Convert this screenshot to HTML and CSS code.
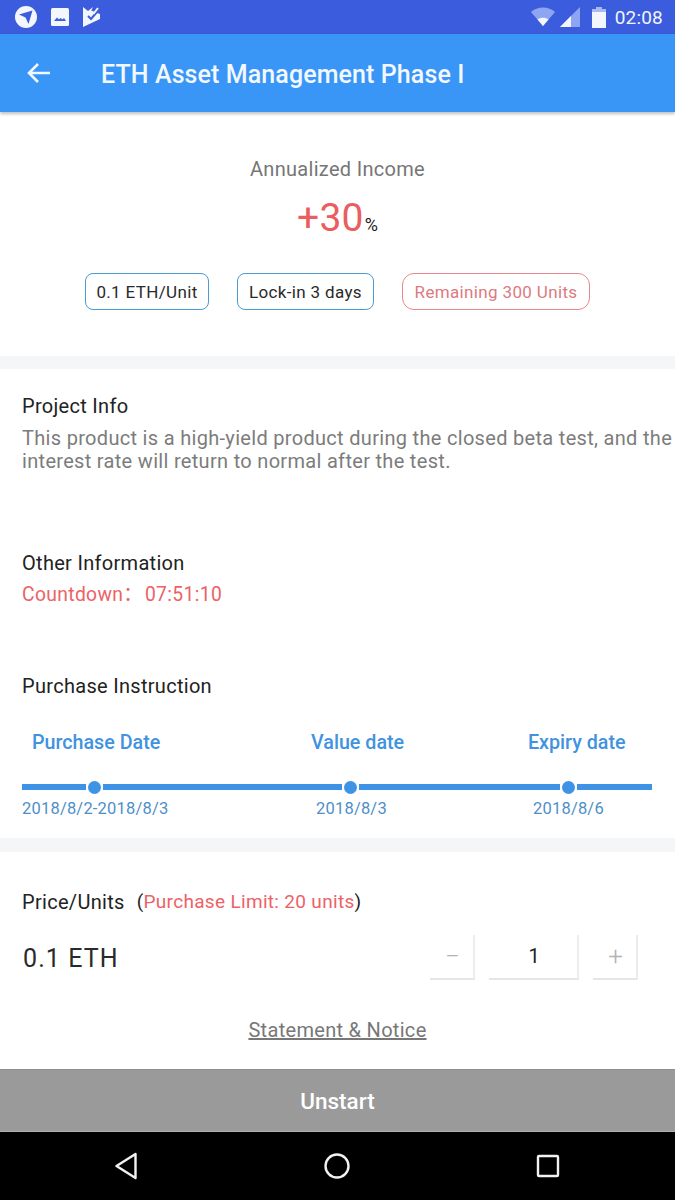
FILE: index.html
```html
<!DOCTYPE html>
<html lang="en">
<head>
<meta charset="utf-8">
<title>ETH Asset Management Phase I</title>
<link rel="stylesheet" href="styles.css">
</head>
<body>
<div class="screen">
  <div class="status">
    <div class="status-left">
      <svg class="ic" width="24" height="24" viewBox="0 0 24 24"><circle cx="12" cy="12" r="11" fill="#f4f6fe"/><path d="M5 9.5 18.5 5.5 14.5 19 11.5 12.5Z" fill="#3b5cdc"/></svg>
      <svg class="ic" width="20" height="20" viewBox="0 0 20 20"><rect x="1" y="1" width="18" height="18" rx="1.5" fill="#f4f6fe"/><path d="M4 14 7 10.5 9 12.5 10.5 11 12.5 12.5 14 11 16 14Z" fill="#3b5cdc"/></svg>
      <svg class="ic" width="20" height="22" viewBox="0 0 20 22"><path d="M1 1 6 5 11 1 9 5 18 8 18 13 1 21Z" fill="#f4f6fe"/><path d="M6 10 9 13 15 6" fill="none" stroke="#3b5cdc" stroke-width="2"/><path d="M8 5 12 7 16 2" fill="none" stroke="#f4f6fe" stroke-width="2"/></svg>
    </div>
    <div class="status-right">
      <svg width="24" height="20" viewBox="0 0 24 20"><path d="M0 5C6-1 18-1 24 5L12 19Z" fill="#8ea6f2"/><path d="M6.500 12.500C9.500 10 14.500 10 17.500 12.500L12 19Z" fill="#f4f6fe"/></svg>
      <svg width="20" height="20" viewBox="0 0 20 20"><path d="M0 20 20 0V20Z" fill="#8ea6f2"/><path d="M0 20 11 9V20Z" fill="#f4f6fe"/></svg>
      <svg class="batt" width="14" height="21" viewBox="0 0 14 21"><path d="M4 0H10V2H14V21H0V2H4Z" fill="#f4f6fe"/><path d="M4 0H10V2H14V5H0V2H4Z" fill="#a9baf2"/></svg>
      <span class="clock">02:08</span>
    </div>
  </div>

  <header class="appbar">
    <svg class="back" width="26" height="24" viewBox="0 0 26 24"><path d="M24 12H3M12 3 3 12 12 21" fill="none" stroke="#f2f8ff" stroke-width="2.600"/></svg>
    <h1 class="title">ETH Asset Management Phase I</h1>
  </header>

  <main class="content">
    <section class="hero">
      <div class="hero-label">Annualized Income</div>
      <div class="rate"><span class="rate-num">+30</span><span class="rate-unit">%</span></div>
      <div class="tags">
        <span class="tag tag-blue tag-a">0.1 ETH/Unit</span>
        <span class="tag tag-blue tag-b">Lock-in 3 days</span>
        <span class="tag tag-red tag-c">Remaining 300 Units</span>
      </div>
    </section>

    <section class="details">
      <h2 class="heading">Project Info</h2>
      <p class="desc">This product is a high-yield product during the closed beta test, and the interest rate will return to normal after the test.</p>
      <h2 class="heading heading-other">Other Information</h2>
      <div class="countdown">Countdown：<span class="cd-time">07:51:10</span></div>
      <h2 class="heading heading-purchase">Purchase Instruction</h2>
      <div class="steps">
        <span class="step step-1">Purchase Date</span>
        <span class="step step-2">Value date</span>
        <span class="step step-3">Expiry date</span>
      </div>
      <div class="track">
        <span class="seg seg-1"></span><span class="dot"></span>
        <span class="seg seg-2"></span><span class="dot"></span>
        <span class="seg seg-3"></span><span class="dot"></span>
        <span class="seg seg-4"></span>
      </div>
      <div class="dates">
        <span class="date-1">2018/8/2-2018/8/3</span>
        <span class="date-2">2018/8/3</span>
        <span class="date-3">2018/8/6</span>
      </div>
    </section>

    <section class="buy">
      <div class="price-head"><span class="price-label">Price/Units</span><span class="limit-wrap">(<span class="limit">Purchase Limit: 20 units</span>)</span></div>
      <div class="qty-row">
        <span class="price">0.1 ETH</span>
        <div class="stepper">
          <span class="qbtn qbtn-minus">−</span>
          <span class="qbox">1</span>
          <span class="qbtn qbtn-plus">+</span>
        </div>
      </div>
      <a class="notice" href="#">Statement &amp; Notice</a>
    </section>
  </main>

  <button class="cta" type="button">Unstart</button>

  <nav class="sysnav">
    <svg width="24" height="28" viewBox="0 0 24 28"><path d="M21.500 2 2.500 14 21.500 26Z" fill="none" stroke="#f2f2f2" stroke-width="2.400" stroke-linejoin="round"/></svg>
    <svg width="26" height="26" viewBox="0 0 26 26"><circle cx="13" cy="13" r="11.500" fill="none" stroke="#f2f2f2" stroke-width="2.400"/></svg>
    <svg width="24" height="24" viewBox="0 0 24 24"><rect x="2" y="2" width="20" height="20" rx="1" fill="none" stroke="#f2f2f2" stroke-width="2.400"/></svg>
  </nav>
</div>
</body>
</html>
```
FILE: styles.css
```css
* { box-sizing: border-box; }
html, body { margin: 0; padding: 0; background: #fff; }
body { font-family: Roboto, "Noto Sans CJK SC", "Noto Sans", sans-serif; color: #222; }
.screen { width: 675px; height: 1200px; display: flex; flex-direction: column; overflow: hidden; }

.status { height: 34px; flex: none; background: #3b5cdc; display: flex; align-items: center; justify-content: space-between; padding: 0 12px 0 14px; }
.status-left { display: flex; align-items: center; gap: 12px; }
.status-right { display: flex; align-items: center; gap: 0; }
.status-right svg:nth-child(2) { margin-left: 5px; }
.batt { margin-left: 12px; }
.clock { color: #f1f4fe; font-size: 19px; margin-left: 9px; letter-spacing: .2px; }

.appbar { height: 78px; flex: none; background: #3a96f6; display: flex; align-items: center; padding-left: 26px; box-shadow: 0 2px 3px rgba(0,0,0,.25); position: relative; z-index: 1; }
.title { margin: 2px 0 0 49px; color: #f2f8ff; font-size: 25px; font-weight: 500; white-space: nowrap; letter-spacing: .1px; }

.content { flex: 1; min-height: 0; display: flex; flex-direction: column; background: #f5f6f7; }
.hero { height: 244px; flex: none; background: #fff; display: flex; flex-direction: column; align-items: center; padding-top: 45px; }
.hero-label { font-size: 20px; line-height: 24px; color: #767676; letter-spacing: .3px; }
.rate { margin-top: 13px; line-height: 48px; height: 48px; display: flex; align-items: baseline; }
.rate-num { font-size: 39px; color: #ea5e62; letter-spacing: .3px; }
.rate-unit { font-size: 18px; color: #222; margin-left: 1px; }
.tags { margin-top: 31px; display: flex; width: 100%; padding-left: 85px; }
.tag { height: 37px; display: flex; align-items: center; justify-content: center; border-radius: 8px; font-size: 17px; letter-spacing: .35px; border: 1px solid; }
.tag-blue { border-color: #4a9bd0; color: #2a2a2a; }
.tag-red { border-color: #e8868c; color: #dc7a80; border-radius: 12px; }
.tag-a { width: 124px; }
.tag-b { width: 137px; margin-left: 28px; }
.tag-c { width: 188px; margin-left: 28px; }

.details { height: 469px; flex: none; margin-top: 13px; background: #fff; padding: 0 22px; display: flex; flex-direction: column; }
.heading { margin: 0; font-size: 20px; font-weight: 400; color: #222; line-height: 24px; letter-spacing: .3px; }
.details > .heading:first-child { margin-top: 25px; }
.desc { margin: 9px -30px 0 0; font-size: 20px; line-height: 23px; color: #7c7c7c; letter-spacing: .31px; height: 46px; }
.heading-other { margin-top: 78px; }
.countdown { margin-top: 8px; font-size: 19.300px; line-height: 24px; color: #ec6266; letter-spacing: .35px; }
.cd-time { margin-left: 2px; }
.heading-purchase { margin-top: 67px; }
.steps { margin-top: 33px; height: 24px; position: relative; font-size: 19.700px; line-height: 24px; color: #3f93e0; font-weight: 500; display: flex; }
.step-1 { margin-left: 10px; width: 279px; }
.step-2 { width: 217px; }
.step-3 { white-space: nowrap; }
.track { margin-top: 26px; height: 12px; display: flex; align-items: center; width: 630px; }
.seg { height: 6px; background: #3f93e6; display: block; }
.dot { width: 13px; height: 13px; border-radius: 50%; background: #3f93e6; margin: 0 2px; flex: none; }
.seg-1 { width: 64px; }
.seg-2 { width: 239px; }
.seg-3 { width: 201px; }
.seg-4 { flex: 1; }
.dates { margin-top: 6px; font-size: 16.500px; line-height: 20px; color: #4f8fc8; display: flex; letter-spacing: .2px; white-space: nowrap; }
.date-1 { width: 294px; }
.date-2 { width: 217px; }

.buy { flex: 1; margin-top: 14px; background: #fff; padding: 0 22px; display: flex; flex-direction: column; }
.price-head { margin-top: 38px; font-size: 19px; line-height: 24px; color: #222; letter-spacing: .3px; display: flex; }
.price-label { font-size: 20px; }
.limit-wrap { margin-left: 12px; letter-spacing: .32px; }
.limit { color: #ec6266; }
.qty-row { margin-top: 19px; height: 50px; display: flex; align-items: center; justify-content: space-between; padding-right: 15px; }
.price { font-size: 25px; letter-spacing: 1.1px; color: #2a2a2a; padding-left: 1px; }
.stepper { display: flex; gap: 14px; margin-bottom: 2px; }
.qbtn, .qbox { height: 45px; display: flex; align-items: center; justify-content: center; background: #fff; border-right: 2px solid #ececec; border-bottom: 2px solid #e6e6e6; padding-left: 2px; }
.qbtn { width: 45px; color: #b0b4b6; font-size: 26px; font-weight: 300; }
.qbox { width: 90px; color: #222; font-size: 20px; }
.notice { margin-top: 35px; align-self: center; font-size: 20px; line-height: 24px; color: #777; text-decoration: underline; letter-spacing: .3px; }

.cta { height: 63px; flex: none; border: 0; border-top: 1px solid #8e8e8e; border-bottom: 1px solid #b0b0b0; background: #9a9a9a; color: #fff; font: 500 22.500px Roboto, sans-serif; padding: 1px 0 0; }
.sysnav { height: 68px; flex: none; background: #000; display: flex; align-items: center; justify-content: space-between; padding: 0 115px 0 114px; }
```
